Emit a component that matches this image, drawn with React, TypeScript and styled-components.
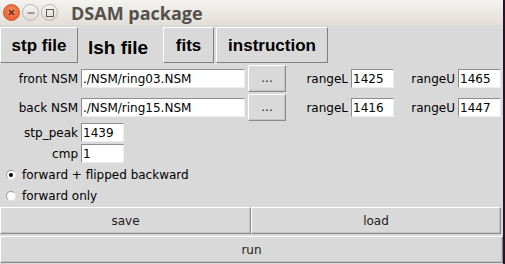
import React from "react";
import styled, { createGlobalStyle } from "styled-components";

const Global = createGlobalStyle`
  html, body { margin: 0; padding: 0; }
  body { width: 505px; height: 264px; overflow: hidden; background: #2d1128; }
  #root { width: 505px; height: 264px; }
`;

const Page = styled.div`
  display: flex;
  width: 505px;
  height: 264px;
  background: #2d1128;
`;

const Window = styled.div`
  width: 503px;
  height: 264px;
  display: flex;
  flex-direction: column;
  background: #d9d9d9;
  font-family: "DejaVu Sans", sans-serif;
  font-size: 12px;
  color: #000;
`;

const TitleBar = styled.div`
  height: 25px;
  flex: none;
  display: flex;
  align-items: center;
  padding-left: 3px;
  background: linear-gradient(#f4f3f0, #e3ded8);
  box-sizing: border-box;
`;

const Controls = styled.div`
  display: flex;
  gap: 2px;
  align-items: center;
`;

const WinButton = styled.div<{ $close?: boolean }>`
  width: 17px;
  height: 17px;
  border-radius: 50%;
  box-sizing: border-box;
  display: flex;
  align-items: center;
  justify-content: center;
  background: ${(p) =>
    p.$close
      ? "radial-gradient(circle at 50% 35%, #f58a5e, #e5562a)"
      : "linear-gradient(#f7f6f4, #dedad5)"};
  border: 1px solid ${(p) => (p.$close ? "#c9552d" : "#b9b4ae")};
`;

const Title = styled.div`
  margin-left: 13px;
  font-family: "Open Sans", sans-serif;
  font-weight: 700;
  font-size: 18px;
  color: #54504c;
  line-height: 1;
`;

const TabBar = styled.div`
  height: 39px;
  flex: none;
  display: flex;
  align-items: flex-start;
  padding-top: 2px;
  box-sizing: border-box;
  gap: 2px;
`;

const Tab = styled.div<{ $active?: boolean; $w: number }>`
  width: ${(p) => p.$w}px;
  height: 36px;
  box-sizing: border-box;
  display: flex;
  align-items: center;
  justify-content: center;
  font-family: "Liberation Sans", Arial, sans-serif;
  font-weight: 700;
  font-size: ${(p) => (p.$active ? 19 : 17)}px;
  padding-top: ${(p) => (p.$active ? 5 : 1)}px;
  padding-right: ${(p) => (p.$active ? 5 : 0)}px;
  border: 1px solid transparent;
  ${(p) =>
    p.$active
      ? ""
      : `border-color: #ffffff #7e7e7e #7e7e7e #ffffff;`}
`;

const Form = styled.div`
  display: grid;
  grid-template-columns: 80px 167px 43px 61px 45px 62px 45px;
  grid-template-rows: 29px 29px 21px 21px;
  align-items: center;
  flex: none;
`;

const Label = styled.div`
  justify-self: end;
  padding-right: 2px;
  white-space: nowrap;
`;

const RangeLabel = styled(Label)`
  padding-right: 3px;
`;

const Entry = styled.div<{ $w: number }>`
  width: ${(p) => p.$w}px;
  height: 19px;
  box-sizing: border-box;
  background: #fff;
  border-top: 1px solid #8d8d8d;
  border-left: 1px solid #8d8d8d;
  border-right: 1px solid #ececec;
  border-bottom: 1px solid #ececec;
  padding-left: 1px;
  display: flex;
  align-items: center;
  white-space: nowrap;
  overflow: hidden;
  margin-left: 1px;
`;

const SmallEntry = styled(Entry)`
  margin-left: 0;
`;

const Button = styled.div`
  box-sizing: border-box;
  height: 27px;
  display: flex;
  align-items: center;
  justify-content: center;
  background: #d9d9d9;
  border: 1px solid;
  border-color: #ffffff #8a8a8a #8a8a8a #ffffff;
  box-shadow: inset -1px -1px 0 #c4c4c4;
  color: #1a1a1a;
`;

const BrowseButton = styled(Button)`
  width: 38px;
  margin-left: 1px;
  padding-bottom: 1px;
`;

const RadioRow = styled.div`
  height: 21px;
  flex: none;
  display: flex;
  align-items: center;
  padding-left: 6px;
  gap: 6px;
`;

const RadioDot = styled.div<{ $on?: boolean }>`
  width: 10px;
  height: 10px;
  border-radius: 50%;
  box-sizing: border-box;
  background: #fff;
  border: 1px solid;
  border-color: #9a9a9a #e8e8e8 #e8e8e8 #9a9a9a;
  display: flex;
  align-items: center;
  justify-content: center;
  &::after {
    content: "";
    width: 4px;
    height: 4px;
    border-radius: 50%;
    background: ${(p) => (p.$on ? "#000" : "transparent")};
  }
`;

const ActionRow = styled.div`
  display: grid;
  grid-template-columns: 251px 250px;
  margin-top: 1px;
  flex: none;
`;

const RunButton = styled(Button)`
  margin-top: 2px;
  width: 503px;
`;

function CloseIcon() {
  return (
    <svg width="7" height="7" viewBox="0 0 7 7">
      <path d="M1 1L6 6M6 1L1 6" stroke="#5b2a17" strokeWidth="1.2" />
    </svg>
  );
}

function MinIcon() {
  return (
    <svg width="8" height="8" viewBox="0 0 8 8">
      <path d="M0.5 4H7.5" stroke="#5a5a5a" strokeWidth="1.1" />
    </svg>
  );
}

function MaxIcon() {
  return (
    <svg width="8" height="8" viewBox="0 0 8 8">
      <rect x="0.5" y="0.5" width="7" height="7" fill="none" stroke="#5a5a5a" strokeWidth="1" />
    </svg>
  );
}

export default function App() {
  return (
    <Page>
      <Global />
      <Window>
        <TitleBar>
          <Controls>
            <WinButton $close>
              <CloseIcon />
            </WinButton>
            <WinButton>
              <MinIcon />
            </WinButton>
            <WinButton>
              <MaxIcon />
            </WinButton>
          </Controls>
          <Title>DSAM package</Title>
        </TitleBar>
        <TabBar>
          <Tab $w={78}>stp file</Tab>
          <Tab $w={81} $active>
            lsh file
          </Tab>
          <Tab $w={51}>fits</Tab>
          <Tab $w={112}>instruction</Tab>
        </TabBar>
        <Form>
          <Label>front NSM</Label>
          <Entry $w={164}>./NSM/ring03.NSM</Entry>
          <BrowseButton>...</BrowseButton>
          <RangeLabel>rangeL</RangeLabel>
          <SmallEntry $w={43}>1425</SmallEntry>
          <RangeLabel>rangeU</RangeLabel>
          <SmallEntry $w={43}>1465</SmallEntry>

          <Label>back NSM</Label>
          <Entry $w={164}>./NSM/ring15.NSM</Entry>
          <BrowseButton>...</BrowseButton>
          <RangeLabel>rangeL</RangeLabel>
          <SmallEntry $w={43}>1416</SmallEntry>
          <RangeLabel>rangeU</RangeLabel>
          <SmallEntry $w={43}>1447</SmallEntry>

          <Label>stp_peak</Label>
          <Entry $w={43}>1439</Entry>
          <span />
          <span />
          <span />
          <span />
          <span />

          <Label>cmp</Label>
          <Entry $w={43}>1</Entry>
        </Form>
        <RadioRow>
          <RadioDot $on />
          forward + flipped backward
        </RadioRow>
        <RadioRow>
          <RadioDot />
          forward only
        </RadioRow>
        <ActionRow>
          <Button>save</Button>
          <Button>load</Button>
        </ActionRow>
        <RunButton>run</RunButton>
      </Window>
    </Page>
  );
}
